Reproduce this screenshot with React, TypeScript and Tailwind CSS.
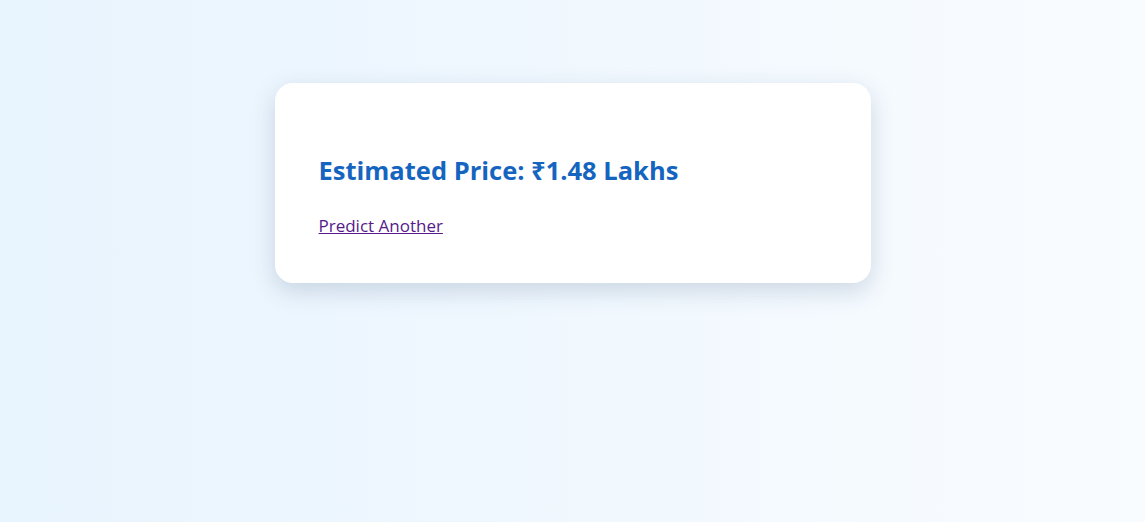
import React from 'react';

const App: React.FC = () => {
  return (
    <div
      className="min-h-[522px] w-full bg-gradient-to-r from-[#e8f4fe] to-[#f9fcff] pt-[83px]"
      style={{ fontFamily: '"Open Sans", "Noto Sans", sans-serif' }}
    >
      <div className="mx-auto flex w-[596px] flex-col rounded-[18px] bg-white px-[44px] pt-[69px] pb-[45px] shadow-[0_8px_24px_rgba(30,60,100,0.18)]">
        <h2 className="text-[25.5px] font-bold leading-[36px] text-[#1565c0]">
          Estimated Price: ₹1.48 Lakhs
        </h2>
        <div className="mt-[26px]">
          <a href="#" className="text-[17px] leading-[24px] text-[#551a8b] underline">
            Predict Another
          </a>
        </div>
      </div>
    </div>
  );
};

export default App;
